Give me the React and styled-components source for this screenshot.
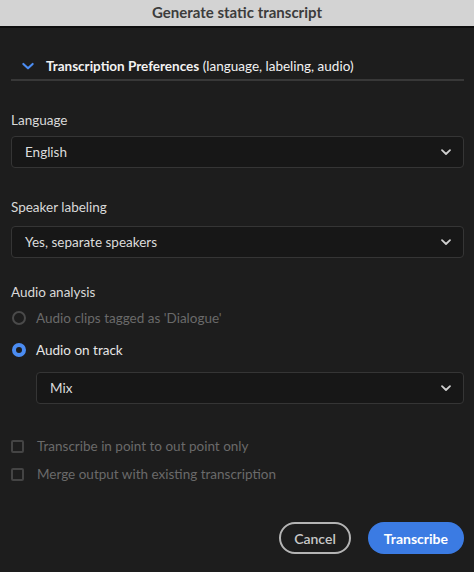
import React, { useState } from 'react';
import styled, { createGlobalStyle } from 'styled-components';

const GlobalStyle = createGlobalStyle`
  html, body {
    margin: 0;
    padding: 0;
    background: #1d1d1d;
  }
  * { box-sizing: border-box; }
`;

const Dialog = styled.div`
  width: 474px;
  height: 572px;
  background: #1d1d1d;
  font-family: 'Lato', 'Noto Sans', sans-serif;
  color: #d6d6d6;
  display: flex;
  flex-direction: column;
`;

const TitleBar = styled.div`
  height: 28px;
  background: #d3d3d3;
  border-bottom: 2px solid #0e0e0e;
  display: flex;
  align-items: center;
  justify-content: center;
  font-size: 15px;
  font-weight: 700;
  color: #3c3c3c;
  padding-bottom: 3px;
`;

const Body = styled.div`
  flex: 1;
  display: flex;
  flex-direction: column;
  padding: 0 10px 0 11px;
`;

const SectionHeader = styled.div`
  display: flex;
  align-items: center;
  gap: 11px;
  margin-top: 30px;
  padding: 0 0 5px 10px;
  border-bottom: 2px solid #383838;
  font-size: 13.5px;
  color: #f2f2f2;

  b { font-weight: 700; }
`;

const Label = styled.div`
  font-size: 13.5px;
  color: #d9d9d9;
  margin-top: ${p => p.$top}px;
  margin-bottom: ${p => (p.$bottom ?? 9)}px;
`;

const Select = styled.div`
  height: 32px;
  margin-left: ${p => p.$indent || 0}px;
  margin-top: ${p => p.$top || 0}px;
  border: 1px solid #353535;
  border-radius: 4px;
  background: #171717;
  display: flex;
  align-items: center;
  justify-content: space-between;
  padding: 0 11px 0 13px;
  font-size: 13.5px;
  color: #dcdcdc;
`;

const Chevron = ({ color = '#d0d0d0', size = 12 }) => (
  <svg width={size} height={size} viewBox="0 0 12 12" fill="none">
    <path d="M2 4.2 L6 8 L10 4.2" stroke={color} strokeWidth="1.8" strokeLinecap="round" strokeLinejoin="round" />
  </svg>
);

const RadioRow = styled.label`
  display: flex;
  align-items: center;
  gap: 10px;
  height: 32px;
  font-size: 13.5px;
  color: ${p => (p.$disabled ? '#6a6a6a' : '#e6e6e6')};
`;

const RadioDot = styled.span`
  width: 14px;
  height: 14px;
  border-radius: 50%;
  margin-left: 1px;
  flex: none;
  border: ${p => (p.$checked ? '4.5px solid #4b8cf2' : '2px solid #4a4a4a')};
  background: #1d1d1d;
`;

const Options = styled.div`
  display: flex;
  flex-direction: column;
  margin-top: 28px;
`;

const CheckRow = styled.label`
  display: flex;
  align-items: center;
  gap: 13px;
  height: 28px;
  font-size: 13.5px;
  color: #6a6a6a;
`;

const CheckBox = styled.span`
  width: 13px;
  height: 13px;
  flex: none;
  border: 2px solid #444;
  border-radius: 2px;
`;

const Footer = styled.div`
  margin-top: auto;
  margin-bottom: 18px;
  display: flex;
  justify-content: flex-end;
  gap: 17px;
`;

const Button = styled.button`
  height: 32px;
  border-radius: 16px;
  font-family: inherit;
  font-size: 14px;
  font-weight: ${p => (p.$primary ? 700 : 600)};
  padding: 0 ${p => p.$pad}px;
  cursor: pointer;
  border: ${p => (p.$primary ? 'none' : '2px solid #b4b4b4')};
  background: ${p => (p.$primary ? '#3b7be3' : 'transparent')};
  color: ${p => (p.$primary ? '#ffffff' : '#c8c8c8')};
`;

export default function App() {
  const [audio, setAudio] = useState('track');

  return (
    <>
      <GlobalStyle />
      <Dialog>
        <TitleBar>Generate static transcript</TitleBar>
        <Body>
          <SectionHeader>
            <Chevron color="#4b8cf2" size={14} />
            <span><b>Transcription Preferences</b> (language, labeling, audio)</span>
          </SectionHeader>

          <Label $top={31} $bottom={8}>Language</Label>
          <Select>English<Chevron /></Select>

          <Label $top={31} $bottom={11}>Speaker labeling</Label>
          <Select>Yes, separate speakers<Chevron /></Select>

          <Label $top={26} $bottom={2}>Audio analysis</Label>
          <RadioRow $disabled>
            <RadioDot />
            Audio clips tagged as 'Dialogue'
          </RadioRow>
          <RadioRow onClick={() => setAudio('track')}>
            <RadioDot $checked={audio === 'track'} />
            Audio on track
          </RadioRow>
          <Select $indent={25} $top={6}>Mix<Chevron /></Select>

          <Options>
            <CheckRow><CheckBox />Transcribe in point to out point only</CheckRow>
            <CheckRow><CheckBox />Merge output with existing transcription</CheckRow>
          </Options>

          <Footer>
            <Button $pad={13}>Cancel</Button>
            <Button $primary $pad={16}>Transcribe</Button>
          </Footer>
        </Body>
      </Dialog>
    </>
  );
}
